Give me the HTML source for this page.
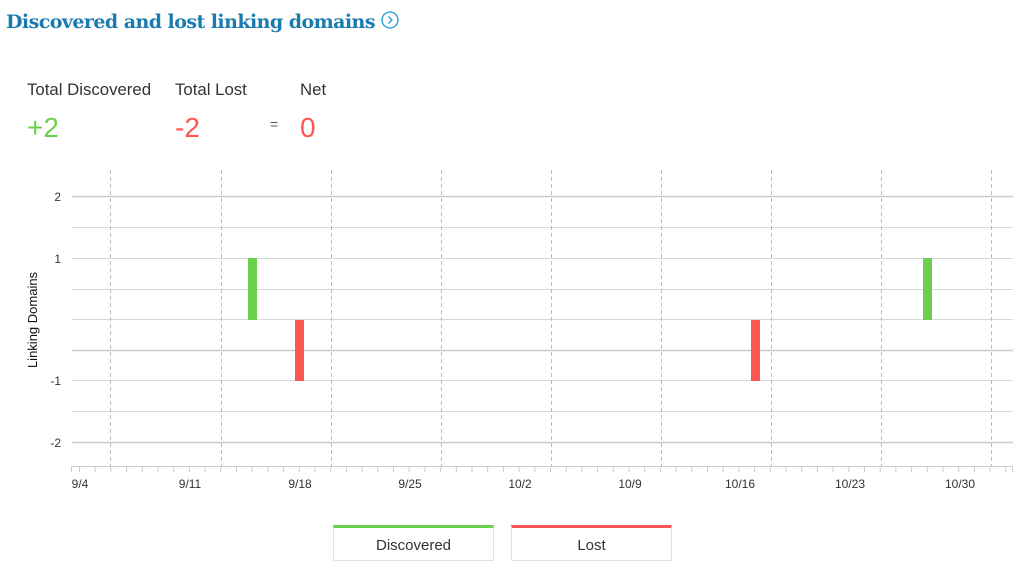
<!DOCTYPE html>
<html><head><style>
body{margin:0;width:1024px;height:575px;background:#fff;font-family:"Liberation Sans",sans-serif;position:relative;overflow:hidden}
.t{position:absolute;left:6px;top:11px;font-family:"DejaVu Serif","Liberation Serif",serif;font-weight:bold;font-size:19px;color:#1a7bb0;letter-spacing:-0.55px}
.l{position:absolute;top:80px;font-size:16.8px;color:#333}
.n{position:absolute;top:112px;font-size:28px}
.lg{position:absolute;top:525px;height:36px;border:1px solid #e2e2e2;border-top:3px solid;box-sizing:border-box;text-align:center;line-height:36px;font-size:15px;color:#333}
</style></head><body>
<div class="t">Discovered and lost linking domains <svg width="18" height="18" viewBox="0 0 18 18" style="vertical-align:-1px"><circle cx="9" cy="9" r="8" fill="none" stroke="#1a9ad6" stroke-width="1.3"/><path d="M7.5 5.5L11 9L7.5 12.5" fill="none" stroke="#1a9ad6" stroke-width="1.3"/></svg></div>
<div class="l" style="left:27px">Total Discovered</div>
<div class="l" style="left:175px">Total Lost</div>
<div class="l" style="left:300px">Net</div>
<div class="n" style="left:27px;color:#6bd04b">+2</div>
<div class="n" style="left:175px;color:#ff5555">-2</div>
<div style="position:absolute;left:270px;top:116px;font-size:14px;color:#555">=</div>
<div class="n" style="left:300px;color:#ff5555">0</div>
<svg width="1024" height="575" style="position:absolute;left:0;top:0">
<g stroke="#d5dbdb" stroke-width="1">
<line x1="72" x2="1013" y1="196.5" y2="196.5" stroke-width="1.5" stroke="#c8cccc"/>
<line x1="72" x2="1013" y1="227.5" y2="227.5"/>
<line x1="72" x2="1013" y1="258.5" y2="258.5"/>
<line x1="72" x2="1013" y1="289.5" y2="289.5"/>
<line x1="72" x2="1013" y1="319.5" y2="319.5"/>
<line x1="72" x2="1013" y1="350.5" y2="350.5" stroke-width="1.5" stroke="#c8cccc"/>
<line x1="72" x2="1013" y1="380.5" y2="380.5"/>
<line x1="72" x2="1013" y1="411.5" y2="411.5"/>
<line x1="72" x2="1013" y1="442.5" y2="442.5" stroke-width="1.5" stroke="#c8cccc"/>
</g>
<g stroke="#bbb" stroke-dasharray="4,3">
<line x1="110.5" x2="110.5" y1="170" y2="466"/><line x1="221.5" x2="221.5" y1="170" y2="466"/><line x1="331.5" x2="331.5" y1="170" y2="466"/><line x1="441.5" x2="441.5" y1="170" y2="466"/><line x1="551.5" x2="551.5" y1="170" y2="466"/><line x1="661.5" x2="661.5" y1="170" y2="466"/><line x1="771.5" x2="771.5" y1="170" y2="466"/><line x1="881.5" x2="881.5" y1="170" y2="466"/><line x1="991.5" x2="991.5" y1="170" y2="466"/>
</g>
<line x1="71" x2="1013" y1="466.5" y2="466.5" stroke="#ccc"/>
<path stroke="#ccc" d="M71.5 466v6 M79.5 466v6 M95.2 466v6 M110.9 466v6 M126.6 466v6 M142.3 466v6 M158 466v6 M173.7 466v6 M189.4 466v6 M205.1 466v6 M220.8 466v6 M236.5 466v6 M252.2 466v6 M267.9 466v6 M283.6 466v6 M299.3 466v6 M315 466v6 M330.7 466v6 M346.4 466v6 M362.1 466v6 M377.8 466v6 M393.5 466v6 M409.2 466v6 M424.9 466v6 M440.6 466v6 M456.3 466v6 M472 466v6 M487.7 466v6 M503.4 466v6 M519.1 466v6 M534.8 466v6 M550.5 466v6 M566.2 466v6 M581.9 466v6 M597.6 466v6 M613.3 466v6 M629 466v6 M644.7 466v6 M660.4 466v6 M676.1 466v6 M691.8 466v6 M707.5 466v6 M723.2 466v6 M738.9 466v6 M754.6 466v6 M770.3 466v6 M786 466v6 M801.7 466v6 M817.4 466v6 M833.1 466v6 M848.8 466v6 M864.5 466v6 M880.2 466v6 M895.9 466v6 M911.6 466v6 M927.3 466v6 M943 466v6 M958.7 466v6 M974.4 466v6 M990.1 466v6 M1005.8 466v6 M1012.5 466v6"/>
<g font-size="12" fill="#333" text-anchor="end">
<text x="61" y="201">2</text><text x="61" y="263">1</text><text x="61" y="385">-1</text><text x="61" y="447">-2</text>
</g>
<g font-size="12" fill="#333" text-anchor="middle">
<text x="80" y="488">9/4</text><text x="190" y="488">9/11</text><text x="300" y="488">9/18</text><text x="410" y="488">9/25</text><text x="520" y="488">10/2</text><text x="630" y="488">10/9</text><text x="740" y="488">10/16</text><text x="850" y="488">10/23</text><text x="960" y="488">10/30</text>
</g>
<text transform="translate(37,320) rotate(-90)" font-size="13" fill="#111" text-anchor="middle">Linking Domains</text>
<rect x="248" y="258" width="9" height="62" fill="#6bd04b"/>
<rect x="295" y="320" width="9" height="61" fill="#ff5555"/>
<rect x="751" y="320" width="9" height="61" fill="#ff5555"/>
<rect x="923" y="258" width="9" height="62" fill="#6bd04b"/>
</svg>
<div class="lg" style="left:333px;width:161px;border-top-color:#6bd04b">Discovered</div>
<div class="lg" style="left:511px;width:161px;border-top-color:#ff5555">Lost</div>
</body></html>
